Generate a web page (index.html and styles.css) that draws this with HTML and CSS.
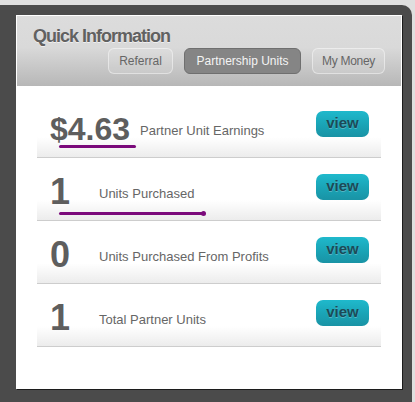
FILE: index.html
```html
<!DOCTYPE html>
<html lang="en">
<head>
<meta charset="utf-8">
<title>Quick Information</title>
<link rel="stylesheet" href="styles.css">
</head>
<body>
<div class="frame">
  <div class="panel">
    <div class="header">
      <h2 class="title">Quick Information</h2>
      <div class="tabs">
        <span class="tab tab-referral">Referral</span>
        <span class="tab tab-units active">Partnership Units</span>
        <span class="tab tab-money">My Money</span>
      </div>
    </div>
    <div class="rows">
      <div class="row">
        <div class="stat">
          <span class="num small">$4.63</span>
          <span class="label">Partner Unit Earnings</span>
        </div>
        <a class="view">view</a>
        <span class="mark mark-1"></span>
      </div>
      <div class="row">
        <div class="stat">
          <span class="num">1</span>
          <span class="label">Units Purchased</span>
        </div>
        <a class="view">view</a>
        <span class="mark mark-2"></span>
      </div>
      <div class="row">
        <div class="stat">
          <span class="num">0</span>
          <span class="label">Units Purchased From Profits</span>
        </div>
        <a class="view">view</a>
      </div>
      <div class="row">
        <div class="stat">
          <span class="num">1</span>
          <span class="label">Total Partner Units</span>
        </div>
        <a class="view">view</a>
      </div>
    </div>
  </div>
</div>
</body>
</html>
```
FILE: styles.css
```css
html, body {
  margin: 0;
  padding: 0;
}
body {
  background: #dfdfdf;
  font-family: "Liberation Sans", Arial, sans-serif;
  height: 402px;
  overflow: hidden;
}
.frame {
  margin-top: 5px;
  width: 412px;
  height: 397px;
  box-sizing: border-box;
  background: #4b4b4b;
  border-top-right-radius: 10px;
  padding: 10px 0 0 16px;
}
.panel {
  width: 386px;
  height: 374px;
  box-sizing: border-box;
  background: #fff;
  border: 1px solid #fff;
  box-shadow: 1px 1px 0 #1c1c1c;
}
.header {
  height: 70px;
  box-sizing: border-box;
  padding: 10px 16px 0 16px;
  background: linear-gradient(to bottom, #dcdcdc 0%, #d9d9d9 45%, #b7b7b7 100%);
}
.title {
  margin: 0;
  font-size: 18px;
  line-height: 21px;
  font-weight: bold;
  letter-spacing: -1px;
  color: #616161;
  text-shadow: 0 1px 0 rgba(255, 255, 255, 0.6);
}
.tabs {
  display: flex;
  justify-content: flex-end;
  gap: 11px;
  margin-top: 1px;
}
.tab {
  height: 26px;
  box-sizing: border-box;
  padding: 0;
  text-align: center;
  white-space: nowrap;
  border: 1px solid rgba(255, 255, 255, 0.45);
  border-radius: 6px;
  background: rgba(255, 255, 255, 0.12);
  font-size: 12px;
  line-height: 24px;
  color: #666;
}
.tab-referral {
  width: 65px;
}
.tab-units {
  width: 117px;
}
.tab-money {
  width: 73px;
  letter-spacing: -0.3px;
}
.tab.active {
  background: #858585;
  border-color: #6f6f6f;
  color: #f4f4f4;
}
.rows {
  width: 344px;
  margin: 9px 0 0 20px;
}
.row {
  position: relative;
  height: 63px;
  box-sizing: border-box;
  padding: 14px 12px 0 13px;
  display: flex;
  justify-content: space-between;
  align-items: flex-start;
  background: linear-gradient(to bottom, #fff 0%, #fff 68%, #ececec 100%);
  border-bottom: 1px solid #cdcdcd;
}
.stat {
  display: flex;
  align-items: flex-end;
}
.num {
  min-width: 39px;
  margin-right: 10px;
  font-size: 36px;
  line-height: 40px;
  font-weight: bold;
  color: #5e5e5e;
}
.num.small {
  font-size: 32px;
}
.label {
  font-size: 13px;
  line-height: 15px;
  color: #666;
  margin-bottom: 11px;
}
.view {
  margin-top: 2px;
  width: 53px;
  height: 26px;
  box-sizing: border-box;
  border-radius: 7px;
  background: linear-gradient(to bottom, #1fb9cc 0%, #1aa3b5 55%, #1993a5 100%);
  text-align: center;
  font-size: 15px;
  line-height: 24px;
  font-weight: bold;
  color: #1b4a57;
  text-shadow: 0 1px 0 rgba(255, 255, 255, 0.25);
  cursor: pointer;
}
.mark {
  position: absolute;
  left: 22px;
  height: 3px;
  border-radius: 2px;
  background: #7b0a7b;
}
.mark-1 {
  top: 50px;
  width: 77px;
}
.mark-2 {
  top: 54px;
  width: 146px;
}
.mark-2::after {
  content: "";
  position: absolute;
  right: -1px;
  top: -1px;
  width: 5px;
  height: 5px;
  border-radius: 50%;
  background: #7b0a7b;
}
```
